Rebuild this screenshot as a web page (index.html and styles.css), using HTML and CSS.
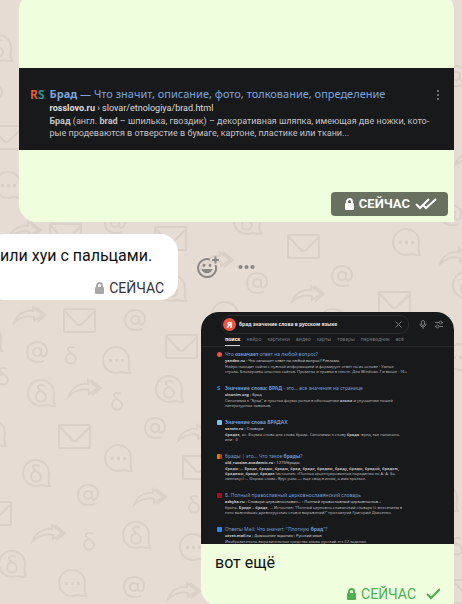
FILE: index.html
```html
<!DOCTYPE html>
<html lang="ru">
  <head>
    <meta charset="UTF-8" />
    <meta name="viewport" content="width=device-width, initial-scale=1.0" />
    <title>Чат</title>
    <link rel="stylesheet" href="styles.css">
  </head>
  <body>
    <svg class="wallpaper" width="480" height="620" aria-hidden="true">
      <defs>
        <g id="mail">
          <rect x="-15" y="-11" width="31" height="23" rx="1" />
          <path d="M-15 -10 L-2 4 Q0 6 3 4 L16 -9" />
        </g>
        <g id="dots">
          <path d="M5 12 A13 13 0 1 1 13 0 C13 6 11 8 14 13 C9 13 8 12 5 12" />
          <path class="fill" d="M-7 -1h3v3h-3z M-1 -1h3v3h-3z M5 -1h3v3h-3z" />
        </g>
        <g id="delta">
          <path d="M4 -7 C1 -9 -4 -8 -3 -5 C-2 -2 5 -1 5 4 C5 10 -5 10 -5 4 C-5 0 -2 -2 1 -2" />
        </g>
        <g id="chat">
          <path d="M5 12 A13 13 0 1 1 13 0 C13 6 11 8 14 13 C9 13 8 12 5 12" />
          <use href="#delta" />
        </g>
        <g id="at">
          <circle r="4" />
          <path d="M4 -4 V2 C4 6 10 5 10 -1 C10 -7 5 -10 0 -10 C-6 -10 -10 -6 -10 0 C-10 6 -6 10 0 10 Q4 10 7 9" />
        </g>
        <g id="arrow">
          <path d="M-16 8 C-13 -1 -5 -5 3 -4 V-8 L13 0 L4 6 V2 C-3 0 -9 2 -16 8 Z M6 -8 L16 0 L7 7" />
        </g>
      </defs>
      <use href="#chat" x="-2" y="48" />
      <use href="#at" x="-8" y="93" />
      <use href="#mail" x="6" y="137" />
      <use href="#dots" x="8" y="185" />
      <use href="#at" x="456" y="76" />
      <use href="#arrow" x="470" y="158" />
      <use href="#at" x="451" y="215" />
      <use href="#arrow" x="25" y="230" />
      <use href="#mail" x="65" y="235" />
      <use href="#at" x="115" y="223" />
      <use href="#mail" x="170" y="238" />
      <use href="#chat" x="247" y="221" />
      <use href="#mail" x="303" y="246" />
      <use href="#dots" x="406" y="242" />
      <use href="#arrow" x="456" y="256" />
      <use href="#arrow" x="217" y="260" />
      <use href="#at" x="257" y="283" />
      <use href="#at" x="342" y="276" />
      <use href="#arrow" x="308" y="294" />
      <use href="#chat" x="172" y="288" />
      <use href="#mail" x="394" y="303" />
      <use href="#chat" x="466" y="285" />
      <use href="#dots" x="225" y="315" />
      <use href="#dots" x="333" y="322" />
      <use href="#arrow" x="30" y="315" />
      <use href="#mail" x="79" y="320" />
      <use href="#at" x="135" y="320" />
      <use href="#chat" x="-12" y="338" />
      <use href="#at" x="37" y="352" />
      <use href="#delta" x="71" y="355" />
      <use href="#dots" x="116" y="360" />
      <use href="#mail" x="181" y="346" />
      <use href="#delta" x="3" y="376" />
      <use href="#chat" x="41" y="393" />
      <use href="#arrow" x="85" y="388" />
      <use href="#delta" x="117" y="401" />
      <use href="#chat" x="169" y="389" />
      <use href="#dots" x="-8" y="433" />
      <use href="#mail" x="74" y="436" />
      <use href="#at" x="155" y="428" />
      <use href="#arrow" x="194" y="433" />
      <use href="#dots" x="118" y="458" />
      <use href="#chat" x="36" y="473" />
      <use href="#mail" x="198" y="467" />
      <use href="#at" x="88" y="495" />
      <use href="#arrow" x="150" y="497" />
      <use href="#delta" x="194" y="504" />
      <use href="#mail" x="-5" y="513" />
      <use href="#arrow" x="49" y="533" />
      <use href="#delta" x="89" y="541" />
      <use href="#chat" x="136" y="535" />
      <use href="#dots" x="193" y="547" />
      <use href="#chat" x="12" y="564" />
      <use href="#dots" x="72" y="583" />
      <use href="#at" x="134" y="587" />
      <use href="#arrow" x="184" y="591" />
      <use href="#dots" x="460" y="357" />
      <use href="#chat" x="444" y="498" />
      <use href="#delta" x="457" y="546" />
      <use href="#mail" x="468" y="591" />
    </svg>

    <main class="chat">
      <article class="message outgoing wide">
        <div class="result-shot">
          <span class="rs"><b class="r">R</b><b class="s">S</b></span>
          <div class="result-body">
            <a class="result-title" href="#"><b>Брад</b> — Что значит, описание, фото, толкование, определение</a>
            <p class="result-url"><b>rosslovo.ru</b> › slovar/etnologiya/brad.html</p>
            <p class="result-text"><b>Брад</b> (англ. <b>brad</b> – шпилька, гвоздик) – декоративная шляпка, имеющая две ножки, кото-<br>рые продеваются в отверстие в бумаге, картоне, пластике или ткани...</p>
          </div>
          <svg class="kebab" width="4" height="12" viewBox="0 0 4 12"><circle cx="2" cy="2" r="1" /><circle cx="2" cy="6" r="1" /><circle cx="2" cy="10" r="1" /></svg>
        </div>
        <div class="status badge">
          <svg class="lock" width="9" height="12" viewBox="0 0 9 12"><path d="M2 5V3.500a2.500 2.500 0 0 1 5 0V5" /><rect y="5" width="9" height="7" rx="1" /></svg>
          <span>СЕЙЧАС</span>
          <svg class="ticks" width="22" height="12" viewBox="0 0 22 12"><path d="M1 6l4 4 9-9M8 7l3 3 10-9" /></svg>
        </div>
      </article>

      <div class="row">
        <article class="message incoming">
          <p class="text">или хуи с пальцами.</p>
          <div class="status">
            <svg class="lock" width="9" height="12" viewBox="0 0 9 12"><path d="M2 5V3.500a2.500 2.500 0 0 1 5 0V5" /><rect y="5" width="9" height="7" rx="1" /></svg>
            <span>СЕЙЧАС</span>
          </div>
        </article>
        <button class="icon-button" type="button" aria-label="Добавить реакцию">
          <svg width="22" height="22" viewBox="0 0 22 22">
            <path class="line" d="M13 3.600A9 9 0 1 0 18.500 9" />
            <path class="line" d="M18.500 0.500v7M15 4h7" />
            <circle cx="7" cy="9.500" r="1.400" /><circle cx="13" cy="9.500" r="1.400" />
            <path d="M4.500 13h11a5.700 5.700 0 0 1-11 0z" />
          </svg>
        </button>
        <button class="icon-button" type="button" aria-label="Ещё">
          <svg width="17" height="22" viewBox="0 0 17 22"><circle cx="2.500" cy="11" r="2" /><circle cx="8.500" cy="11" r="2" /><circle cx="14.500" cy="11" r="2" /></svg>
        </button>
      </div>

      <article class="message outgoing narrow">
        <div class="search-shot">
          <div class="search-row">
            <div class="search-box">
              <span class="logo">Я</span>
              <span class="query">брад значение слова в русском языке</span>
              <svg width="7" height="7" viewBox="0 0 7 7"><path d="M0.500 0.500l6 6M6.500 0.500l-6 6" /></svg>
            </div>
            <svg width="8" height="9" viewBox="0 0 8 9"><rect x="2.500" y="0.500" width="3" height="5" rx="1.500" /><path d="M1 3.500c0 4.500 6 4.500 6 0M4 7v2" /></svg>
            <svg width="8" height="9" viewBox="0 0 8 9"><path d="M0 2.500h4M7 2.500h1M0 6.500h1M4 6.500h4" /><circle cx="5.500" cy="2.500" r="1.400" /><circle cx="2.500" cy="6.500" r="1.400" /></svg>
          </div>
          <nav class="tabs">
            <a class="active" href="#">поиск</a>
            <a href="#">нейро</a>
            <a href="#">картинки</a>
            <a href="#">видео</a>
            <a href="#">карты</a>
            <a href="#">товары</a>
            <a href="#">переводчик</a>
            <a href="#">всё</a>
          </nav>
          <ul class="results">
            <li>
              <i class="favicon red"></i>
              <a href="#">Что <b>означает</b> ответ на любой вопрос?</a>
              <p><b>yandex.ru</b> › Что означает ответ на любой вопрос? Реклама</p>
              <p class="snippet">Нейро находит сайты с нужной информацией и формирует ответ на их основе · Умная<br>строка. Блокировка опасных сайтов. Промпты и правки в тексте. Для Windows 7 и выше · 16+</p>
            </li>
            <li>
              <b class="favicon letter">S</b>
              <a href="#"><b>Значение слова: БРАД</b> - это... все значения на странице</a>
              <p><b>sinonim.org</b> › Брад</p>
              <p class="snippet">Синонимы к "Брад" и простая форма рольи в обогащении <b>языка</b> и улучшении нашей<br>литературных навыков.</p>
            </li>
            <li>
              <i class="favicon sky"></i>
              <a href="#"><b>Значение слова БРАДАХ</b></a>
              <p><b>sanstv.ru</b> › Словари</p>
              <p class="snippet"><b>брадах</b>, ах. Формы слова для слова брада. Синонимы к слову <b>брада</b>: вред, как написано.<br>или · 0</p>
            </li>
            <li>
              <i class="favicon bars"></i>
              <a href="#">брады | это... Что такое <b>брады</b>?</a>
              <p><b>old_russian.academic.ru</b> › 1219/брады</p>
              <p class="snippet"><b>брады</b> — <b>Брада, брады, брады, брад, браде, брадам, браду, брады, брадой, брадою,</b><br><b>брадами, браде, брадах</b> (источник: «Полная акцентуированная парадигма по А. А. За-<br>лизняку») … Формы слова. Ярус рока — еще свод в ином, а имя краткое.</p>
            </li>
            <li>
              <i class="favicon dark-red"></i>
              <a href="#">Б, Полный православный церковнославянский словарь</a>
              <p><b>azbyka.ru</b> › Словари церковнославян... › Полный православный церковнослов...</p>
              <p class="snippet">брань. <b>Браде – браде</b>, ... Источник: "Полный церковно-славянский словарь (с внесением в<br>него важнейших древнерусских слов и выражений)" протоиерей Григорий Дьяченко.</p>
            </li>
            <li>
              <i class="favicon blue"></i>
              <a href="#">Ответы Mail: Что значит: "Плотную <b>брад</b>"?</a>
              <p><b>otvet.mail.ru</b> › Домашние задания › Русский язык</p>
              <p class="snippet">Изобразительно-выразительные средства языка русский егэ 22 задание.</p>
            </li>
          </ul>
        </div>
        <p class="text">вот ещё</p>
        <div class="status">
          <svg class="lock" width="9" height="12" viewBox="0 0 9 12"><path d="M2 5V3.500a2.500 2.500 0 0 1 5 0V5" /><rect y="5" width="9" height="7" rx="1" /></svg>
          <span>СЕЙЧАС</span>
          <svg class="ticks" width="14" height="12" viewBox="0 0 14 12"><path d="M1 6l4 4 9-9" /></svg>
        </div>
      </article>
    </main>
  </body>
</html>
```

FILE: styles.css
```css
* {
  box-sizing: border-box;
  margin: 0;
  padding: 0;
}

html,
body {
  height: 100%;
  overflow: hidden;
}

body {
  position: relative;
  background: #e6dcd4;
  font-family: Roboto, Arial, sans-serif;
}

a {
  color: inherit;
  text-decoration: none;
}

/* doodles behind the chat */
.wallpaper {
  position: absolute;
  top: 0;
  left: 0;
  fill: none;
  stroke: #dad0c8;
  stroke-width: 2;
}

.wallpaper .fill {
  fill: #dad0c8;
  stroke: none;
}

.chat {
  position: relative;
  display: flex;
  flex-direction: column;
  gap: 12px;
  margin-top: -8px;
  padding: 0 8px 0 19px;
}

.message {
  border-radius: 18px;
}

.outgoing {
  background: #efffde;
  border-bottom-right-radius: 0;
}

.text {
  font-size: 16px;
  line-height: 22px;
  color: #111;
}

.status {
  display: flex;
  align-items: center;
  justify-content: flex-end;
  gap: 5px;
  font-size: 14px;
  line-height: 16px;
}

.lock rect {
  fill: currentColor;
}

.lock path,
.ticks path {
  fill: none;
  stroke: currentColor;
  stroke-width: 2;
}

/* first message: a single search result */
.wide {
  padding: 76px 0 6px;
}

.result-shot {
  display: flex;
  gap: 5px;
  padding: 18px 14px 11px 11px;
  background: #18191b;
  color: #c4c4c6;
}

.result-body {
  flex: 1;
  min-width: 0;
  white-space: nowrap;
}

.rs {
  font: 12px/18px "Open Sans", sans-serif;
}

.rs .r {
  color: #e8573a;
}

.rs .s {
  color: #149a94;
}

.result-title {
  display: block;
  font-family: "Noto Sans", sans-serif;
  font-size: 11px;
  line-height: 16px;
  color: #7ba5dc;
}

.result-url {
  font-size: 9px;
  line-height: 13px;
  color: #dededf;
}

.result-text {
  font-size: 9px;
  line-height: 12px;
}

.kebab {
  margin-top: 3px;
  fill: #8a8b8d;
}

.badge {
  width: fit-content;
  margin: 42px 6px 0 auto;
  padding: 4px 11px 4px 14px;
  border-radius: 4px;
  background: #687060;
  color: #fff;
  font-size: 13px;
  font-weight: bold;
}

/* second message with its hover buttons */
.row {
  display: flex;
  align-items: center;
}

.incoming {
  margin-left: -33px;
  padding: 11px 14px 4px 14px;
  background: #fff;
}

.incoming .text {
  padding-right: 12px;
}

.incoming .status {
  margin-top: 13px;
  color: #333;
}

.incoming .lock {
  color: #a8a8a8;
}

.icon-button {
  margin-left: 19px;
  border: 0;
  background: none;
  fill: #8a8784;
  cursor: pointer;
}

.icon-button svg {
  display: block;
}

.icon-button .line {
  fill: none;
  stroke: #8a8784;
  stroke-width: 2;
}

/* third message: the whole search page */
.narrow {
  width: 58%;
  min-width: 253px;
  align-self: flex-end;
  overflow: hidden;
}

.narrow .text {
  padding: 8px 14px 0;
}

.narrow .status {
  margin-top: 12px;
  padding: 0 14px 4px;
  color: #4caf50;
}

.narrow .ticks {
  margin-left: 5px;
}

.search-shot {
  height: 232px;
  overflow: hidden;
  background: #18191b;
  color: #b4b4b6;
  font-family: "Noto Sans", sans-serif;
  white-space: nowrap;
}

.search-row {
  display: flex;
  align-items: center;
  gap: 8px;
  padding: 3px 11px 0 20px;
}

.search-row svg {
  fill: none;
  stroke: #77787a;
}

.search-box {
  flex: 1;
  display: flex;
  align-items: center;
  margin-right: 2px;
  padding: 2px 6px 2px 1px;
  border: 1px solid #2b2c2e;
  border-radius: 9px;
}

.logo {
  width: 13px;
  height: 13px;
  border-radius: 50%;
  background: #f0533f;
  color: #fff;
  font-size: 9px;
  font-weight: bold;
  line-height: 13px;
  text-align: center;
}

.query {
  flex: 1;
  margin-left: 3px;
  font-size: 5px;
  font-weight: bold;
  line-height: 13px;
  color: #e6e6e8;
}

.tabs {
  display: flex;
  gap: 6px;
  padding-left: 24px;
  border-bottom: 1px solid #292a2c;
  font-size: 5px;
  line-height: 11px;
  color: #77787a;
}

.tabs .active {
  border-bottom: 1px solid #d0d0d2;
  color: #fff;
  font-weight: bold;
}

.results {
  padding: 4px 0 0 24px;
  list-style: none;
}

.results li {
  position: relative;
  margin-bottom: 11px;
  font-size: 4px;
  line-height: 6px;
}

.results p {
  color: #d0d0d2;
}

.results a {
  display: block;
  font-size: 5px;
  line-height: 7px;
  color: #709bd2;
}

.results .snippet {
  line-height: 5px;
  color: #b8b8ba;
}

.favicon {
  position: absolute;
  top: 1px;
  left: -8px;
  width: 5px;
  height: 5px;
  border-radius: 1px;
}

.red {
  border-radius: 50%;
  background: #f0533f;
}

.letter {
  font-size: 6px;
  line-height: 5px;
  color: #1597f0;
}

.sky {
  background: #7cc4ee;
}

.bars {
  background: linear-gradient(90deg, #cf8a24 33%, #3f9a43 33% 66%, #c5392e 66%);
}

.dark-red {
  background: #a3121c;
}

.blue {
  background: #2f88f0;
}
```
